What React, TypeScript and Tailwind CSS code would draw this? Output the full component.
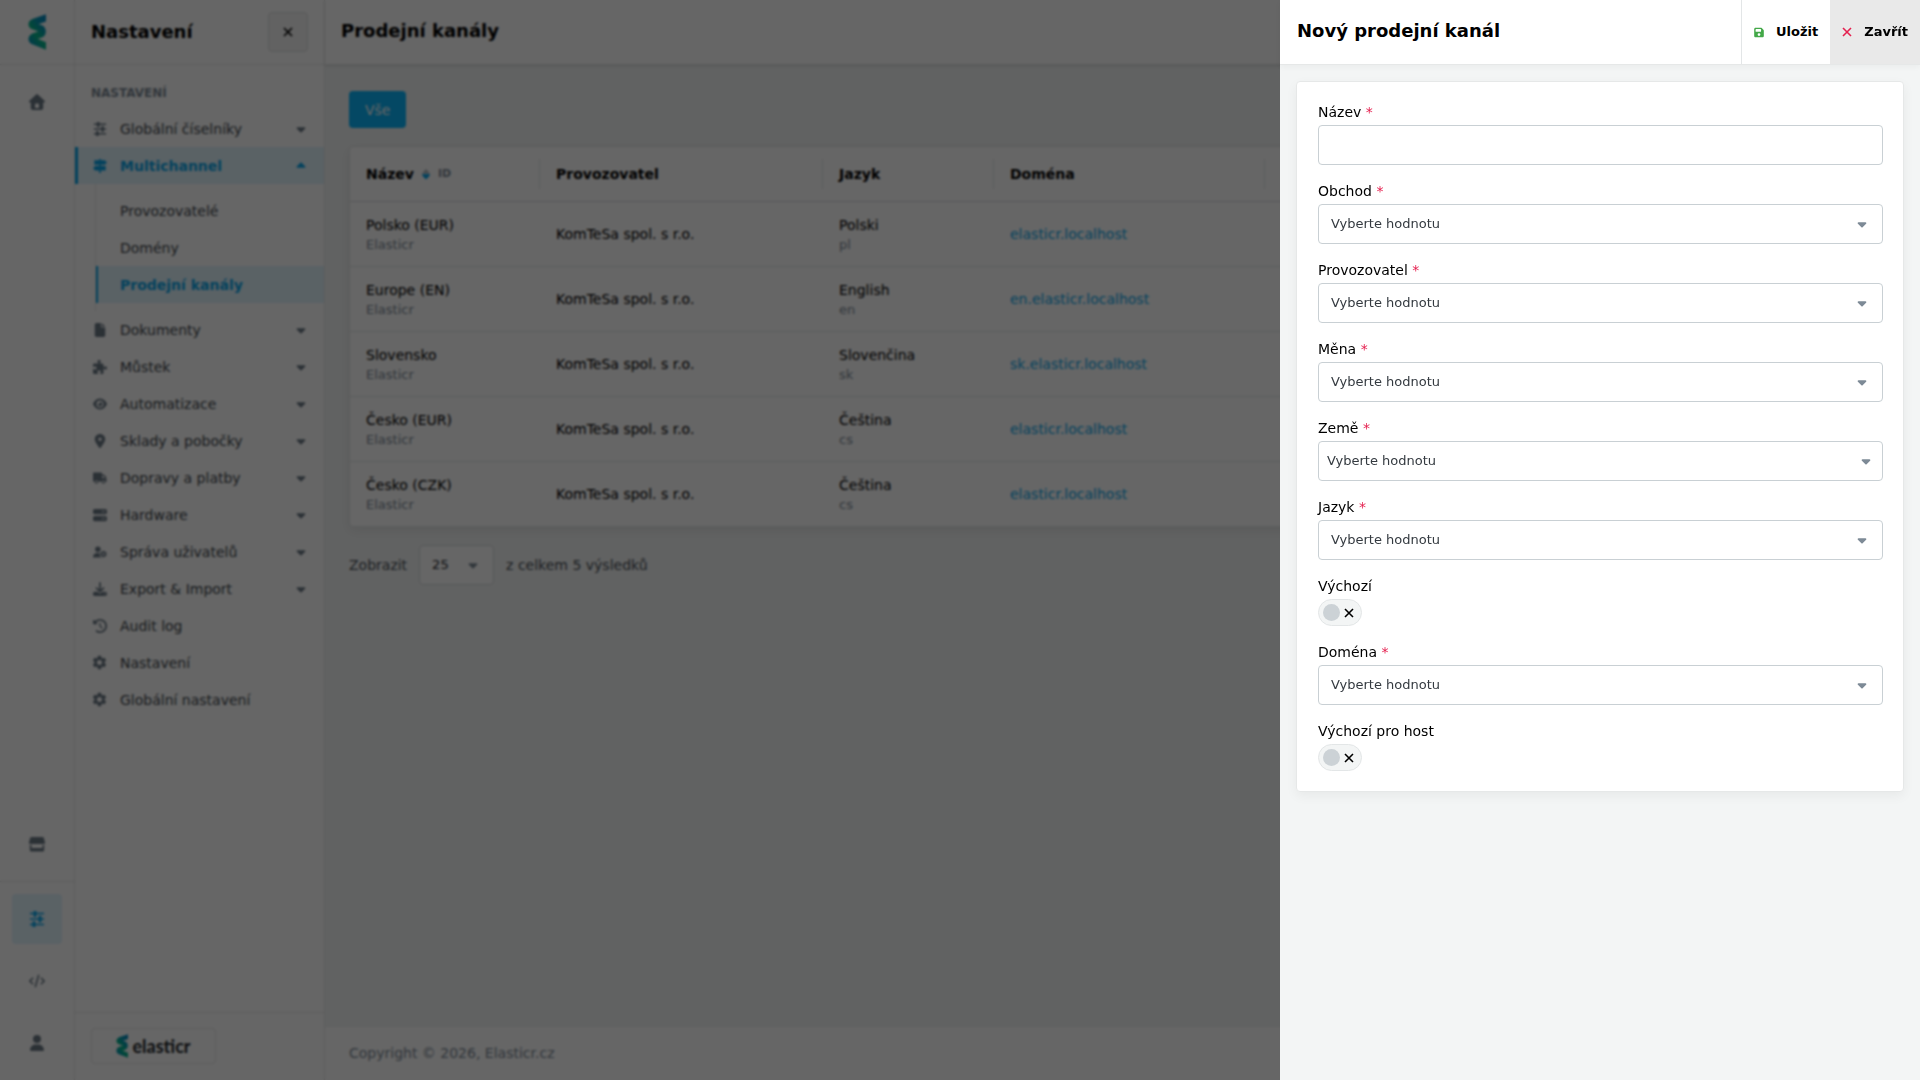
import type { ReactNode } from "react";
import {
  FaCaretDown, FaCaretUp, FaClockRotateLeft, FaCode, FaDownload, FaEye, FaFile, FaFloppyDisk,
  FaLocationDot, FaPuzzlePiece, FaServer, FaTruck, FaUser, FaUserGear,
} from "react-icons/fa6";
import { MdSettings } from "react-icons/md";

type IconProps = { className?: string };
type Item = { label: string; icon: ReactNode; caret: boolean };

function Cross({ className }: IconProps) {
  return (
    <svg viewBox="0 0 10 10" className={className} aria-hidden="true">
      <path d="M1 1l8 8M9 1L1 9" stroke="currentColor" strokeWidth="1.6" fill="none" />
    </svg>
  );
}

function Sliders({ className }: IconProps) {
  return (
    <svg viewBox="0 0 16 16" className={className} fill="none" stroke="currentColor" aria-hidden="true">
      <path d="M1 2.500h14M1 8h14M1 13.500h14" strokeWidth="1.700" />
      <path d="M6 .5v4M11 6v4M5 11.500v4" strokeWidth="3" strokeLinecap="round" />
    </svg>
  );
}

function SignPost({ className }: IconProps) {
  return (
    <svg viewBox="0 0 16 16" className={className} fill="currentColor" aria-hidden="true">
      <path d="M7 0h2v1.500h4.500L16 4l-2.500 2.500H9V8h5.500v5H9v3H7v-3H2.500L0 10.500 2.500 8H7V6.500H1.500v-5H7z" />
    </svg>
  );
}

function Home({ className }: IconProps) {
  return (
    <svg viewBox="0 0 16 16" className={className} fill="currentColor" aria-hidden="true">
      <path
        fillRule="evenodd"
        d="M7.200.4a1.200 1.200 0 0 1 1.600 0l6.800 6.400c.7.700.4 1.700-.6 1.700h-.8V14a2 2 0 0 1-2 2H3.800a2 2 0 0 1-2-2V8.500H1C0 8.500-.3 7.500.4 6.800zM6 14h4v-3.500a1 1 0 0 0-1-1H7a1 1 0 0 0-1 1z"
      />
    </svg>
  );
}

function Store({ className }: IconProps) {
  return (
    <svg viewBox="0 0 16 16" className={className} fill="currentColor" aria-hidden="true">
      <path d="M2.500 1h11a1.500 1.500 0 0 1 1.400 1L16 6.500V7a1 1 0 0 1-1 1H1a1 1 0 0 1-1-1v-.5L1.100 2a1.500 1.500 0 0 1 1.400-1z" />
      <path d="M.8 9h1.700v3h11V9h1.700v5a1.500 1.500 0 0 1-1.500 1.500H2.300A1.500 1.500 0 0 1 .8 14z" />
    </svg>
  );
}

const topItems: Item[] = [{ label: "Globální číselníky", icon: <Sliders className="size-[14px]" />, caret: true }];

const bottomItems: Item[] = [
  { label: "Dokumenty", icon: <FaFile className="size-[14px]" />, caret: true },
  { label: "Můstek", icon: <FaPuzzlePiece className="size-[14px]" />, caret: true },
  { label: "Automatizace", icon: <FaEye className="size-[14px]" />, caret: true },
  { label: "Sklady a pobočky", icon: <FaLocationDot className="size-[14px]" />, caret: true },
  { label: "Dopravy a platby", icon: <FaTruck className="size-[14px]" />, caret: true },
  { label: "Hardware", icon: <FaServer className="size-[14px]" />, caret: true },
  { label: "Správa uživatelů", icon: <FaUserGear className="size-[14px]" />, caret: true },
  { label: "Export & Import", icon: <FaDownload className="size-[14px]" />, caret: true },
  { label: "Audit log", icon: <FaClockRotateLeft className="size-[14px]" />, caret: false },
  { label: "Nastavení", icon: <MdSettings className="size-[17px]" />, caret: false },
  { label: "Globální nastavení", icon: <MdSettings className="size-[17px]" />, caret: false },
];

const rows = [
  { name: "Polsko (EUR)", lang: "Polski", code: "pl", domain: "elasticr.localhost" },
  { name: "Europe (EN)", lang: "English", code: "en", domain: "en.elasticr.localhost" },
  { name: "Slovensko", lang: "Slovenčina", code: "sk", domain: "sk.elasticr.localhost" },
  { name: "Česko (EUR)", lang: "Čeština", code: "cs", domain: "elasticr.localhost" },
  { name: "Česko (CZK)", lang: "Čeština", code: "cs", domain: "elasticr.localhost" },
];

function Logo({ id, className }: { id: string; className: string }) {
  return (
    <svg viewBox="0 0 18 36" className={className} aria-hidden="true">
      <defs>
        <linearGradient id={id} gradientUnits="userSpaceOnUse" x1="18" y1="0" x2="2" y2="12" spreadMethod="reflect">
          <stop offset="0" stopColor="#0a86c4" />
          <stop offset="0.5" stopColor="#0596b8" />
          <stop offset="1" stopColor="#08b88a" />
        </linearGradient>
      </defs>
      <path
        d="M20 3.200L5.500 8.300Q4 9 4 10.300Q4 11.500 5.500 12L12.500 14.500Q14.300 15.300 14.300 17.500Q14.300 19.500 12.500 20.300L5.500 22.800Q4 23.500 4 25Q4 26.300 5.500 27L20 32.800"
        fill="none"
        stroke={`url(#${id})`}
        strokeWidth="7"
        strokeLinejoin="round"
      />
    </svg>
  );
}

function RailButton({ label, active, children }: { label: string; active?: boolean; children: ReactNode }) {
  return (
    <button
      aria-label={label}
      className={
        active
          ? "flex h-[50px] w-[50px] items-center justify-center rounded-sm bg-[#e0f4fd] text-[#0ba5e9]"
          : "flex h-[50px] w-[50px] items-center justify-center text-[#6c7a86]"
      }
    >
      {children}
    </button>
  );
}

function NavItem({ item }: { item: Item }) {
  return (
    <a href="#" className="flex h-[37px] items-center px-4 text-sm text-[#40464c]">
      <span className="mr-3 flex w-[17px] justify-center text-[#6c7a86]">{item.icon}</span>
      <span className="flex-1">{item.label}</span>
      {item.caret && <FaCaretDown className="size-[14px] text-[#6c7a86]" />}
    </a>
  );
}

function Field({ id, label, children }: { id: string; label: string; children: ReactNode }) {
  return (
    <div>
      <label htmlFor={id} className="block h-[23px] text-sm text-black">
        {label} <span className="text-[#e5204f]">*</span>
      </label>
      {children}
    </div>
  );
}

function SelectField({ id, label, compact }: { id: string; label: string; compact?: boolean }) {
  return (
    <Field id={id} label={label}>
      <div className="relative">
        <select
          id={id}
          className={
            compact
              ? "h-10 w-full appearance-none rounded border border-[#c9d0d4] bg-white px-2 text-[13px] text-[#343a40]"
              : "h-10 w-full appearance-none rounded border border-[#c9d0d4] bg-white px-3 text-[13px] text-[#343a40]"
          }
        >
          <option>Vyberte hodnotu</option>
        </select>
        <FaCaretDown
          className={
            compact
              ? "pointer-events-none absolute top-[13px] right-[10px] size-[14px] text-[#7d8a96]"
              : "pointer-events-none absolute top-[13px] right-[14px] size-[14px] text-[#7d8a96]"
          }
        />
      </div>
    </Field>
  );
}

function Toggle({ id, label }: { id: string; label: string }) {
  return (
    <div>
      <label htmlFor={id} className="block h-[23px] text-sm text-black">
        {label}
      </label>
      <label className="flex h-[27px] w-11 items-center gap-1 rounded-full border border-[#e3e6e7] bg-[#f3f5f5] pl-1">
        <input id={id} type="checkbox" className="size-[17px] appearance-none rounded-full bg-[#ccd2d6]" />
        <Cross className="size-[10px] text-black" />
      </label>
    </div>
  );
}

function HeadCell({ children, last }: { children?: ReactNode; last?: boolean }) {
  return (
    <th className="p-0 text-left font-bold">
      <div
        className={
          last ? "flex h-[30px] items-center px-4" : "flex h-[30px] items-center border-r border-[#e3e6e7] px-4"
        }
      >
        {children}
      </div>
    </th>
  );
}

export default function App() {
  return (
    <div className="flex h-screen overflow-hidden bg-[#f3f5f5] font-['DejaVu_Sans',sans-serif] text-sm">
      <nav className="flex w-[75px] shrink-0 flex-col border-r border-[#e6e8e8] bg-white">
        <div className="flex h-[65px] items-center justify-center border-b border-[#e6e8e8]">
          <Logo id="rail" className="h-9 w-[18px]" />
        </div>
        <div className="flex flex-1 justify-center pt-3">
          <RailButton label="Domů">
            <Home className="size-4" />
          </RailButton>
        </div>
        <div className="flex flex-col items-center border-b border-[#e6e8e8] pb-3">
          <RailButton label="Obchod">
            <Store className="size-4" />
          </RailButton>
        </div>
        <div className="flex flex-col items-center gap-3 py-3">
          <RailButton label="Nastavení" active>
            <Sliders className="size-4" />
          </RailButton>
          <RailButton label="Vývojář">
            <FaCode className="size-4" />
          </RailButton>
          <RailButton label="Profil">
            <FaUser className="size-4" />
          </RailButton>
        </div>
      </nav>

      <aside className="flex w-[250px] shrink-0 flex-col border-r border-[#e6e8e8] bg-white">
        <div className="flex h-[65px] items-center justify-between border-b border-[#e6e8e8] px-4">
          <h2 className="text-lg font-bold text-black">Nastavení</h2>
          <button
            aria-label="Skrýt menu"
            className="flex size-10 items-center justify-center rounded border border-[#e0e2e2] bg-[#f5f5f5]"
          >
            <Cross className="size-[10px] text-black" />
          </button>
        </div>
        <div className="flex-1 pt-5">
          <h3 className="h-[25px] px-4 text-xs font-bold text-[#7d8a96]">NASTAVENÍ</h3>
          {topItems.map((item) => (
            <NavItem key={item.label} item={item} />
          ))}
          <a
            href="#"
            className="flex h-[37px] items-center border-l-3 border-[#0ba5e9] bg-[#e0f4fd] pr-4 pl-[13px] text-sm font-bold text-[#0ba5e9]"
          >
            <span className="mr-3 flex w-[17px] justify-center">
              <SignPost className="size-[14px]" />
            </span>
            <span className="flex-1">Multichannel</span>
            <FaCaretUp className="size-[14px]" />
          </a>
          <div className="ml-5 flex flex-col border-l border-[#e6e8e8] py-2">
            <a href="#" className="flex h-[37px] items-center pl-6 text-[#40464c]">
              Provozovatelé
            </a>
            <a href="#" className="flex h-[37px] items-center pl-6 text-[#40464c]">
              Domény
            </a>
            <a
              href="#"
              className="flex h-[37px] items-center border-l-2 border-[#0ba5e9] bg-[#e0f4fd] pl-[22px] font-bold text-[#0ba5e9]"
            >
              Prodejní kanály
            </a>
          </div>
          {bottomItems.map((item) => (
            <NavItem key={item.label} item={item} />
          ))}
        </div>
        <div className="border-t border-[#e6e8e8] px-4 pt-[15px] pb-4">
          <a
            href="#"
            className="flex h-9 w-[125px] items-center justify-center gap-1 rounded border border-[#e6e8e8] font-[Lato] text-lg leading-5 font-bold text-[#23272b]"
          >
            <Logo id="brand" className="h-6 w-3" />
            elasticr
          </a>
        </div>
      </aside>

      <div className="flex min-w-0 flex-1 flex-col">
        <header className="flex h-[65px] shrink-0 items-center border-b border-[#e6e8e8] bg-white px-4 shadow-sm">
          <h1 className="pb-0.5 text-lg font-bold text-black">Prodejní kanály</h1>
        </header>
        <main className="flex-1 px-6 pt-[26px]">
          <button className="h-[37px] rounded bg-[#0ab4fa] px-4 text-white">Vše</button>
          <div className="mt-[18px] rounded border border-[#e3e6e7] bg-white shadow-[0_4px_12px_rgba(0,0,0,0.07)]">
            <table className="w-full table-fixed border-collapse">
              <colgroup>
                <col className="w-[190px]" />
                <col className="w-[283px]" />
                <col className="w-[171px]" />
                <col className="w-[271px]" />
                <col />
              </colgroup>
              <thead>
                <tr className="h-[54px] border-b border-[#d8dcde] text-black">
                  <HeadCell>
                    Název
                    <svg viewBox="0 0 8 12" className="ml-2 h-3 w-2" aria-hidden="true">
                      <path d="M4 1l4 4.500H0z" fill="#aab3ba" />
                      <path d="M0 6h8q0 2-4 5.500Q0 8 0 6z" fill="#0ba5e9" />
                    </svg>
                    <span className="ml-2 text-[11px] text-[#7d8a96]">ID</span>
                  </HeadCell>
                  <HeadCell>Provozovatel</HeadCell>
                  <HeadCell>Jazyk</HeadCell>
                  <HeadCell>Doména</HeadCell>
                  <HeadCell last />
                </tr>
              </thead>
              <tbody>
                {rows.map((r) => (
                  <tr key={r.name} className="h-[65px] border-b border-[#e3e6e7] text-black last:border-b-0">
                    <td className="px-4 pt-0.5 pb-0">
                      {r.name}
                      <div className="text-[13px] leading-5 text-[#7d8a96]">Elasticr</div>
                    </td>
                    <td className="px-4 py-0">KomTeSa spol. s r.o.</td>
                    <td className="px-4 pt-0.5 pb-0">
                      {r.lang}
                      <div className="text-[13px] leading-5 text-[#7d8a96]">{r.code}</div>
                    </td>
                    <td className="px-4 py-0">
                      <a href="#" className="text-[#0ba5e9]">
                        {r.domain}
                      </a>
                    </td>
                    <td />
                  </tr>
                ))}
              </tbody>
            </table>
          </div>
          <div className="mt-[18px] flex items-center gap-3 text-[#495057]">
            <label htmlFor="page-size">Zobrazit</label>
            <div className="relative">
              <select
                id="page-size"
                className="h-10 w-[75px] appearance-none rounded border border-[#d5dadd] bg-white px-3 text-[13px] text-[#23272b]"
              >
                <option>25</option>
              </select>
              <FaCaretDown className="pointer-events-none absolute top-[13px] right-[14px] size-[14px] text-[#7d8a96]" />
            </div>
            <span>z celkem 5 výsledků</span>
          </div>
        </main>
        <footer className="flex h-[54px] items-center border-t border-[#eef0f0] bg-white px-6 pb-0.5 text-[#7d8a96]">
          Copyright © 2026, Elasticr.cz
        </footer>
      </div>

      <div className="fixed inset-0 bg-black/60 backdrop-blur-[1px]" />

      <section
        role="dialog"
        aria-labelledby="dialog-title"
        className="fixed inset-y-0 right-0 flex w-1/3 flex-col bg-[#f3f5f5]"
      >
        <header className="flex h-[65px] shrink-0 border-b border-[#e6e8e8] bg-white shadow-[0_2px_6px_rgba(0,0,0,0.04)]">
          <div className="flex flex-1 items-center pl-[17px]">
            <h2 id="dialog-title" className="pb-0.5 text-lg font-bold text-black">
              Nový prodejní kanál
            </h2>
          </div>
          <button className="flex items-center gap-3 border-l border-[#e3e6e7] px-3 text-[13px] font-bold text-black">
            <FaFloppyDisk className="h-[11px] w-[10px] text-[#43a848]" />
            Uložit
          </button>
          <button className="flex items-center gap-3 bg-[#e9e9e9] px-3 text-[13px] font-bold text-black">
            <Cross className="size-[10px] text-[#e5204f]" />
            Zavřít
          </button>
        </header>
        <form className="mx-4 mt-4 flex flex-col gap-4 rounded border border-[#e6e8e8] bg-white py-5 pr-5 pl-[21px] shadow-[0_4px_12px_rgba(0,0,0,0.05)]">
          <Field id="name" label="Název">
            <input id="name" type="text" className="h-10 w-full rounded border border-[#c9d0d4] bg-white px-3" />
          </Field>
          <SelectField id="shop" label="Obchod" />
          <SelectField id="operator" label="Provozovatel" />
          <SelectField id="currency" label="Měna" />
          <SelectField id="country" label="Země" compact />
          <SelectField id="language" label="Jazyk" />
          <Toggle id="default" label="Výchozí" />
          <SelectField id="domain" label="Doména" />
          <Toggle id="default-host" label="Výchozí pro host" />
        </form>
      </section>
    </div>
  );
}
